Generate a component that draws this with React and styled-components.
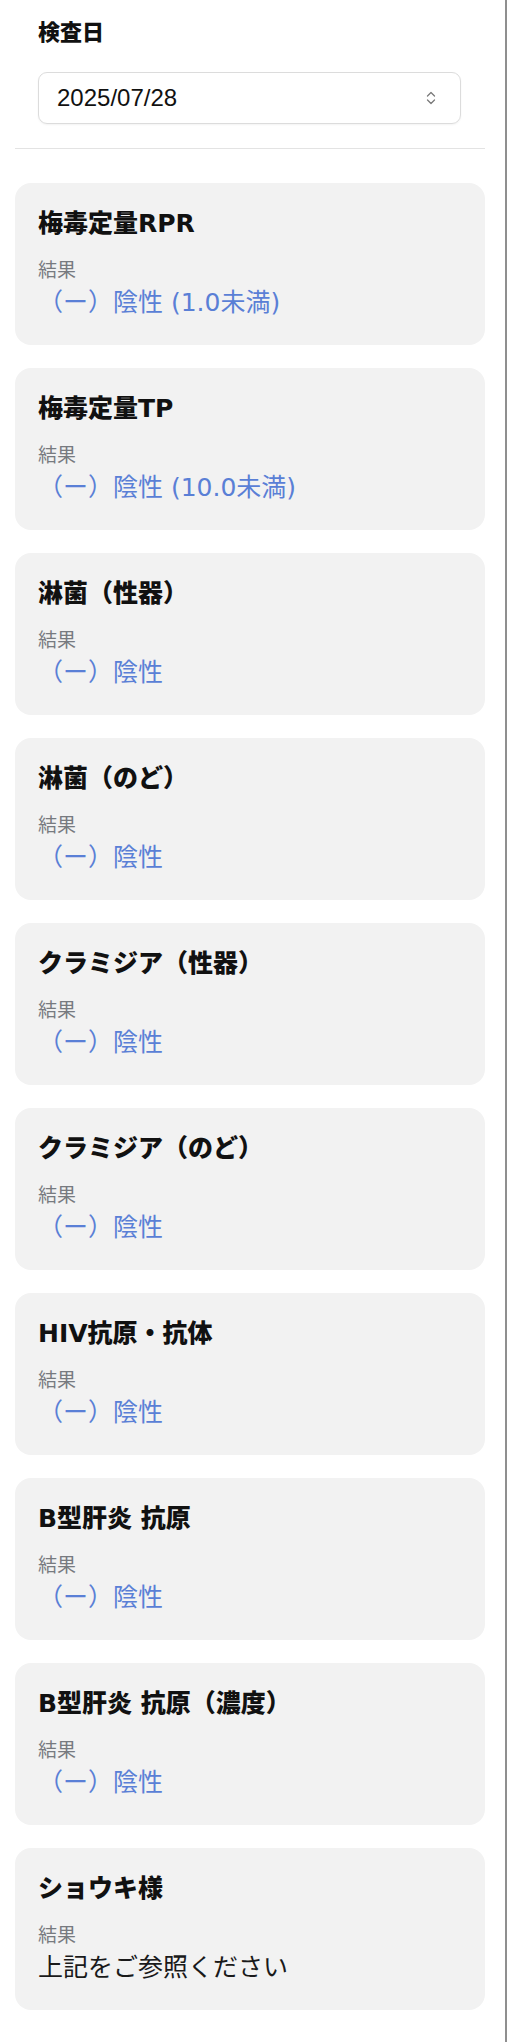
import styled, { createGlobalStyle } from "styled-components";

const GlobalStyle = createGlobalStyle`
  html, body {
    margin: 0;
    padding: 0;
    background: #ffffff;
  }
  body {
    font-family: "DejaVu Sans", "Noto Sans CJK JP", sans-serif;
    color: #111;
  }
`;

const Page = styled.div`
  width: 507px;
  min-height: 100vh;
  box-sizing: border-box;
  padding: 0 20px 30px 15px;
  border-right: 2px solid #8f8f8f;
`;

const DateSection = styled.section`
  padding: 18px 24px 24px 23px;
  border-bottom: 1px solid #e3e3e3;
`;

const Label = styled.h2`
  margin: 0 0 24px;
  font-size: 22px;
  line-height: 30px;
  font-weight: 900;
`;

const Select = styled.div`
  height: 52px;
  box-sizing: border-box;
  display: flex;
  align-items: center;
  justify-content: space-between;
  padding: 0 24px 0 18px;
  border: 1px solid #dcdcdc;
  border-radius: 9px;
  box-shadow: 0 1px 2px rgba(0, 0, 0, 0.05);
  font-family: "Liberation Sans", "Noto Sans CJK JP", sans-serif;
  font-size: 24px;
  color: #111;
`;

const List = styled.div`
  display: flex;
  flex-direction: column;
  gap: 23px;
  margin-top: 34px;
`;

const Card = styled.div`
  background: #f2f2f2;
  border-radius: 16px;
  padding: 25px 23px 26px;
  display: flex;
  flex-direction: column;
`;

const Title = styled.h3`
  margin: 0 0 18px;
  font-size: 25px;
  line-height: 32px;
  font-weight: 900;
`;

const Field = styled.span`
  font-size: 19px;
  line-height: 24px;
  color: #777a80;
  margin-bottom: 5px;
`;

const Value = styled.span`
  font-size: 25px;
  line-height: 32px;
  color: ${({ $plain }) => ($plain ? "#1a1a1a" : "#5a7fd6")};
`;

const Chevrons = () => (
  <svg width="10" height="14" viewBox="0 0 10 14" fill="none">
    <path
      d="M1.5 5 L5 1.5 L8.5 5 M1.5 9 L5 12.5 L8.5 9"
      stroke="#7a7a7a"
      strokeWidth="1.3"
      strokeLinecap="round"
      strokeLinejoin="round"
    />
  </svg>
);

const results = [
  { name: "梅毒定量RPR", value: "（ー）陰性 (1.0未満)" },
  { name: "梅毒定量TP", value: "（ー）陰性 (10.0未満)" },
  { name: "淋菌（性器）", value: "（ー）陰性" },
  { name: "淋菌（のど）", value: "（ー）陰性" },
  { name: "クラミジア（性器）", value: "（ー）陰性" },
  { name: "クラミジア（のど）", value: "（ー）陰性" },
  { name: "HIV抗原・抗体", value: "（ー）陰性" },
  { name: "B型肝炎 抗原", value: "（ー）陰性" },
  { name: "B型肝炎 抗原（濃度）", value: "（ー）陰性" },
  { name: "ショウキ様", value: "上記をご参照ください", plain: true },
];

export default function App() {
  return (
    <>
      <GlobalStyle />
      <Page>
        <DateSection>
          <Label>検査日</Label>
          <Select>
            <span>2025/07/28</span>
            <Chevrons />
          </Select>
        </DateSection>
        <List>
          {results.map((r) => (
            <Card key={r.name}>
              <Title>{r.name}</Title>
              <Field>結果</Field>
              <Value $plain={r.plain}>{r.value}</Value>
            </Card>
          ))}
        </List>
      </Page>
    </>
  );
}
